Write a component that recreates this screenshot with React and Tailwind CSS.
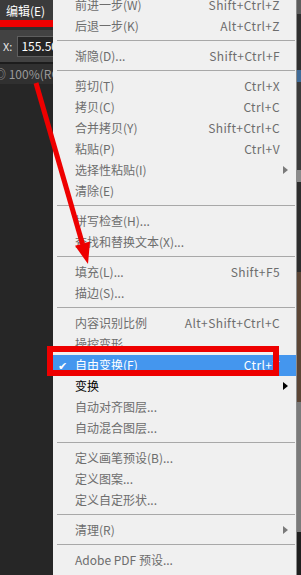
import React from 'react';

const rows = [
  { t: '前进一步(W)', k: 'Shift+Ctrl+Z' },
  { t: '后退一步(K)', k: 'Alt+Ctrl+Z' },
  'sep',
  { t: '渐隐(D)...', k: 'Shift+Ctrl+F' },
  'sep',
  { t: '剪切(T)', k: 'Ctrl+X' },
  { t: '拷贝(C)', k: 'Ctrl+C' },
  { t: '合并拷贝(Y)', k: 'Shift+Ctrl+C' },
  { t: '粘贴(P)', k: 'Ctrl+V' },
  { t: '选择性粘贴(I)', sub: true },
  { t: '清除(E)' },
  'sep',
  { t: '拼写检查(H)...' },
  { t: '查找和替换文本(X)...' },
  'sep',
  { t: '填充(L)...', k: 'Shift+F5' },
  { t: '描边(S)...' },
  'sep',
  { t: '内容识别比例', k: 'Alt+Shift+Ctrl+C' },
  { t: '操控变形' },
  { t: '自由变换(F)', k: 'Ctrl+T', active: true },
  { t: '变换', sub: true, on: true },
  { t: '自动对齐图层...' },
  { t: '自动混合图层...' },
  'sep',
  { t: '定义画笔预设(B)...' },
  { t: '定义图案...' },
  { t: '定义自定形状...' },
  'sep',
  { t: '清理(R)', sub: true },
  'sep',
  { t: 'Adobe PDF 预设...' },
];

function MenuRow({ row }) {
  if (row === 'sep') {
    return (
      <div className="h-[9px] pt-[3px] pl-[4px] pr-[1px]">
        <div className="h-px bg-[#a8a8a8]" />
      </div>
    );
  }
  const color = row.active ? 'text-white' : row.on ? 'text-black' : 'text-[#6d6d6d]';
  return (
    <div
      className={`h-[21px] flex items-center text-[12px] leading-none ${color} ${
        row.active ? 'bg-[#4496ee]' : ''
      } ${row.sub ? 'pr-[8px]' : 'pr-[16px]'}`}
    >
      <span className="w-[22px] shrink-0 pl-[5px] text-[11px]">{row.active ? '✔' : ''}</span>
      <span className="whitespace-nowrap">{row.t}</span>
      <span className="ml-auto whitespace-nowrap tracking-[0.4px]">{row.k}</span>
      {row.sub && (
        <span
          className={`ml-auto w-0 h-0 border-y-[4px] border-y-transparent border-l-[5px] ${
            row.on ? 'border-l-black' : 'border-l-[#7a7a7a]'
          }`}
        />
      )}
    </div>
  );
}

export default function App() {
  return (
    <div
      className="relative flex w-[301px] h-[575px] overflow-hidden bg-[#262626]"
      style={{ fontFamily: '"Noto Sans CJK SC", "Noto Sans", sans-serif' }}
    >
      {/* left side of the photoshop window */}
      <div className="w-[53px] shrink-0 flex flex-col">
        <div className="h-[20px] bg-[#3b3b3b] text-white text-[12px] leading-none pl-[6px] pt-[5px] whitespace-nowrap">
          编辑(E)
        </div>
        <div className="h-[7px] bg-[#ee0000]" />
        <div className="h-[3px] bg-[#2f2f2f]" />
        <div className="h-[32px] bg-[#424242] flex items-center pl-[3px] gap-[5px]">
          <span className="text-[11px] text-[#e6e6e6] leading-none">X:</span>
          <div className="flex-1 h-[21px] bg-[#262626] border border-[#5e5e5e] border-r-0 text-[12px] text-white leading-none pl-[3px] flex items-center overflow-hidden whitespace-nowrap">
            155.50
          </div>
        </div>
        <div className="h-[2px] bg-[#1c1c1c]" />
        <div className="h-[20px] bg-[#303030] flex items-center text-[12px] text-[#9a9a9a] leading-none whitespace-nowrap overflow-hidden">
          <span className="-ml-[6px]">◎ 100%(RGB</span>
        </div>
        <div className="flex-1 bg-[#262626]" />
      </div>

      {/* edit menu */}
      <div className="w-[243px] shrink-0 bg-[#f0f0f0] overflow-hidden">
        <div className="-mt-[5.5px]">
          {rows.map((row, i) => (
            <MenuRow key={i} row={row} />
          ))}
        </div>
      </div>
      <div className="w-px shrink-0 bg-[#8c8c8c]" />

      {/* right strip of canvas */}
      <div className="flex-1 flex flex-col">
        <div className="h-[14px] bg-[#5d5d5d]" />
        <div className="h-[56px] bg-[#2f2f2f]" />
        <div className="h-[12px] bg-[#3f6b98]" />
        <div className="h-[88px] bg-[#3a3a3a]" />
        <div className="h-[12px] bg-[#8a8a8a]" />
        <div className="h-[90px] bg-[#2c2c2c]" />
        <div className="h-[130px] bg-[#5b4535]" />
        <div className="h-[130px] bg-[#7a7a7a]" />
        <div className="flex-1 bg-[#1f1f1f]" />
      </div>

      {/* red annotations */}
      <div className="absolute left-[47px] top-[346px] w-[232px] h-[30px] border-[6px] border-[#ee0000] pointer-events-none" />
      <svg className="absolute left-0 top-0 pointer-events-none" width="301" height="575" viewBox="0 0 301 575">
        <line x1="36" y1="83" x2="82.5" y2="244" stroke="#ee0000" strokeWidth="5" />
        <polygon points="88,264 90,241.5 75,245.8" fill="#ee0000" />
      </svg>
    </div>
  );
}
